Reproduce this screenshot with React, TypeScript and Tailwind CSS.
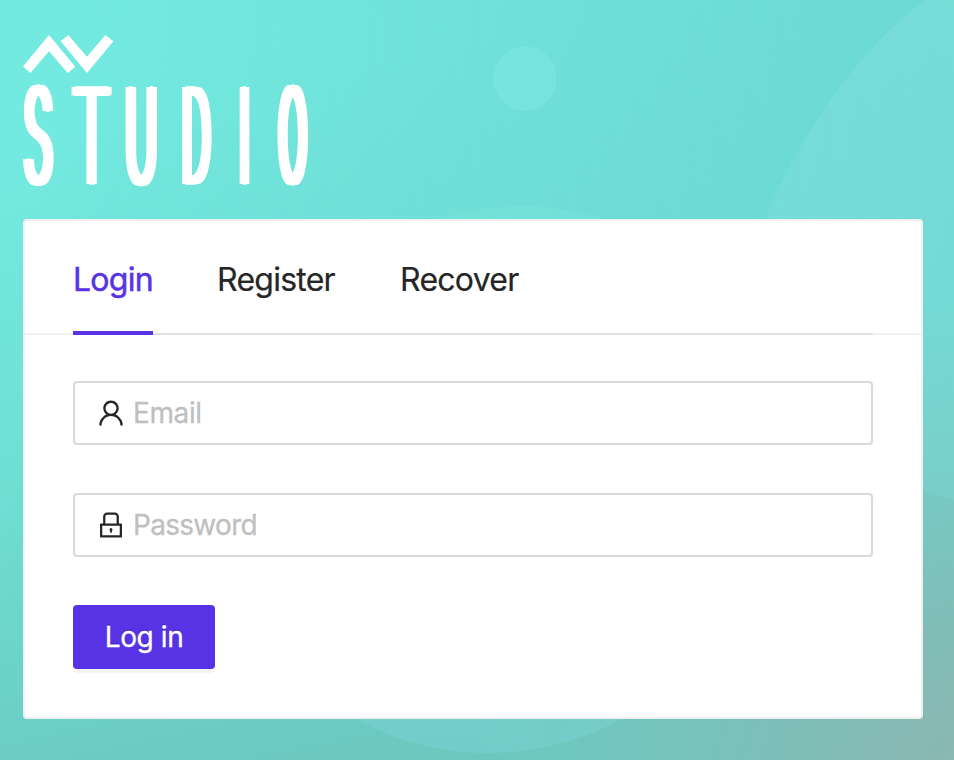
import { AiOutlineLock, AiOutlineUser } from "react-icons/ai";

const tabs = ["Login", "Register", "Recover"];

function Backdrop() {
  return (
    <svg
      className="absolute inset-0 h-full w-full"
      viewBox="0 0 954 760"
      preserveAspectRatio="none"
      aria-hidden="true"
    >
      <defs>
        <linearGradient id="base" gradientUnits="userSpaceOnUse" x1="60" y1="130" x2="200" y2="780">
          <stop offset="0" stopColor="#73eae0" />
          <stop offset="0.5" stopColor="#6fdfd4" />
          <stop offset="1" stopColor="#6bc9c0" />
        </linearGradient>
        <linearGradient id="side" gradientUnits="userSpaceOnUse" x1="60" y1="60" x2="960" y2="160">
          <stop offset="0" stopColor="#6cd8d3" stopOpacity="0" />
          <stop offset="1" stopColor="#6cd8d3" stopOpacity="1" />
        </linearGradient>
        <linearGradient id="fade" x1="0" y1="0" x2="0" y2="1">
          <stop offset="0.35" stopColor="#ffffff" />
          <stop offset="0.85" stopColor="#000000" />
        </linearGradient>
        <mask id="sideMask">
          <rect width="954" height="760" fill="url(#fade)" />
        </mask>
        <radialGradient id="corner" gradientUnits="userSpaceOnUse" cx="1010" cy="820" r="560">
          <stop offset="0" stopColor="#90b4b1" stopOpacity="1" />
          <stop offset="0.25" stopColor="#8bb7b3" stopOpacity="0.85" />
          <stop offset="1" stopColor="#7cc3ba" stopOpacity="0" />
        </radialGradient>
        <linearGradient id="orb" x1="0" y1="0" x2="0" y2="1">
          <stop offset="0" stopColor="#7de6de" />
          <stop offset="1" stopColor="#7fd6dc" />
        </linearGradient>
        <linearGradient id="blob" gradientUnits="userSpaceOnUse" x1="860" y1="0" x2="900" y2="500">
          <stop offset="0" stopColor="#8ce2df" stopOpacity="0.36" />
          <stop offset="1" stopColor="#85dbde" stopOpacity="0.22" />
        </linearGradient>
      </defs>
      <rect width="954" height="760" fill="url(#base)" />
      <rect width="954" height="760" fill="url(#side)" mask="url(#sideMask)" />
      <rect width="954" height="760" fill="url(#corner)" />
      <ellipse cx="525" cy="78.500" rx="31.500" ry="32.500" fill="#86ebe4" fillOpacity="0.38" />
      <ellipse
        cx="0"
        cy="0"
        rx="274"
        ry="273.500"
        transform="translate(504 479.500) skewX(-3.45)"
        fill="url(#orb)"
        fillOpacity="0.34"
      />
      <path d="M925 0C865 47 815 108 765 218C700 370 800 460 923 491L954 500V0Z" fill="url(#blob)" />
    </svg>
  );
}

function Brand() {
  return (
    <div className="flex h-[150px] flex-col text-white">
      <svg className="h-[39px] w-[90px]" viewBox="0 0 90 39" fill="currentColor" aria-hidden="true">
        <path d="M26 0L52.300 31.700L44.700 38L26 16.300L7.500 38L0 31.500Z" />
        <path d="M45.300 0L64 21.700L82.300 0L90.300 6.300L64 38L37.700 6.300Z" />
      </svg>
      <div className="mt-[11px] flex h-[100px] w-[287px] font-['Inter'] text-[134px] leading-[100px] font-light [-webkit-text-stroke:1.5px]">
        <span className="flex w-[31px] justify-center">
          <span className="scale-x-[0.34] [text-shadow:-11px_0,-5px_0,5px_0,11px_0]">S</span>
        </span>
        <span className="ml-[16px] flex w-[43px] justify-center">
          <span className="scale-x-[0.48] [text-shadow:-6px_0,-3px_0,3px_0,6px_0]">T</span>
        </span>
        <span className="ml-[12px] flex w-[33px] justify-center">
          <span className="scale-x-[0.32] [text-shadow:-12px_0,-6px_0,6px_0,12px_0]">U</span>
        </span>
        <span className="ml-[23px] flex w-[31px] justify-center">
          <span className="scale-x-[0.3] [text-shadow:-12px_0,-6px_0,6px_0,12px_0]">D</span>
        </span>
        <span className="ml-[27px] flex w-[11px] justify-center">
          <span className="scale-x-[0.33] [text-shadow:-10px_0,-5px_0,5px_0,10px_0]">I</span>
        </span>
        <span className="ml-[27px] flex w-[32px] justify-center">
          <span className="scale-x-[0.27] [text-shadow:-14px_0,-7px_0,7px_0,14px_0]">O</span>
        </span>
      </div>
    </div>
  );
}

const inputClass =
  "min-w-0 flex-1 bg-transparent text-[28px] leading-9 text-[#262626] outline-none [-webkit-text-stroke:0.3px] placeholder:text-[#bfbfbf]";

export default function App() {
  return (
    <main className="relative isolate h-[760px] w-[954px] overflow-hidden font-['Inter',sans-serif]">
      <div className="absolute inset-0 -z-10">
        <Backdrop />
      </div>
      <div className="flex flex-col pt-[35px] pr-[31px] pl-[23px]">
        <Brand />
        <section className="mt-[34px] h-[500px] rounded-[4px] border-2 border-[#f0f0f0] bg-white">
          <header className="flex h-[114px] border-b-2 border-[#f0f0f0] px-12">
            <nav className="flex h-[114px] flex-1 gap-16 border-b-2 border-[#e1e1e1] text-[32px] leading-[117px] tracking-[-0.75px] text-[#262626] [-webkit-text-stroke:0.2px]">
              {tabs.map((tab, index) => (
                <button
                  key={tab}
                  type="button"
                  className={
                    index === 0
                      ? "flex h-[114px] w-20 border-b-4 border-[#5733e5] text-[#5733e5] [-webkit-text-stroke:0.5px]"
                      : "flex h-[112px] w-[119px]"
                  }
                >
                  {tab}
                </button>
              ))}
            </nav>
          </header>
          <form className="flex flex-col items-start px-12 pt-[46px]">
            <label className="flex h-16 w-full items-center rounded-[4px] border-2 border-[#d9d9d9] px-5 text-[#262626]">
              <AiOutlineUser className="mr-1.5 size-8 shrink-0" />
              <input className={`${inputClass} tracking-[-0.4px]`} type="email" placeholder="Email" />
            </label>
            <label className="mt-12 flex h-16 w-full items-center rounded-[4px] border-2 border-[#d9d9d9] px-5 text-[#262626]">
              <AiOutlineLock className="mr-1.5 size-8 shrink-0" />
              <input className={`${inputClass} tracking-[-0.7px]`} type="password" placeholder="Password" />
            </label>
            <button
              type="button"
              className="mt-12 h-16 w-[142px] rounded-[4px] bg-[#5733e5] text-[28px] tracking-[-0.4px] text-white shadow-[0_4px_0_rgba(0,0,0,0.045)] [-webkit-text-stroke:0.3px] [text-shadow:0_-2px_0_rgba(0,0,0,0.12)]"
            >
              Log in
            </button>
          </form>
        </section>
      </div>
    </main>
  );
}
